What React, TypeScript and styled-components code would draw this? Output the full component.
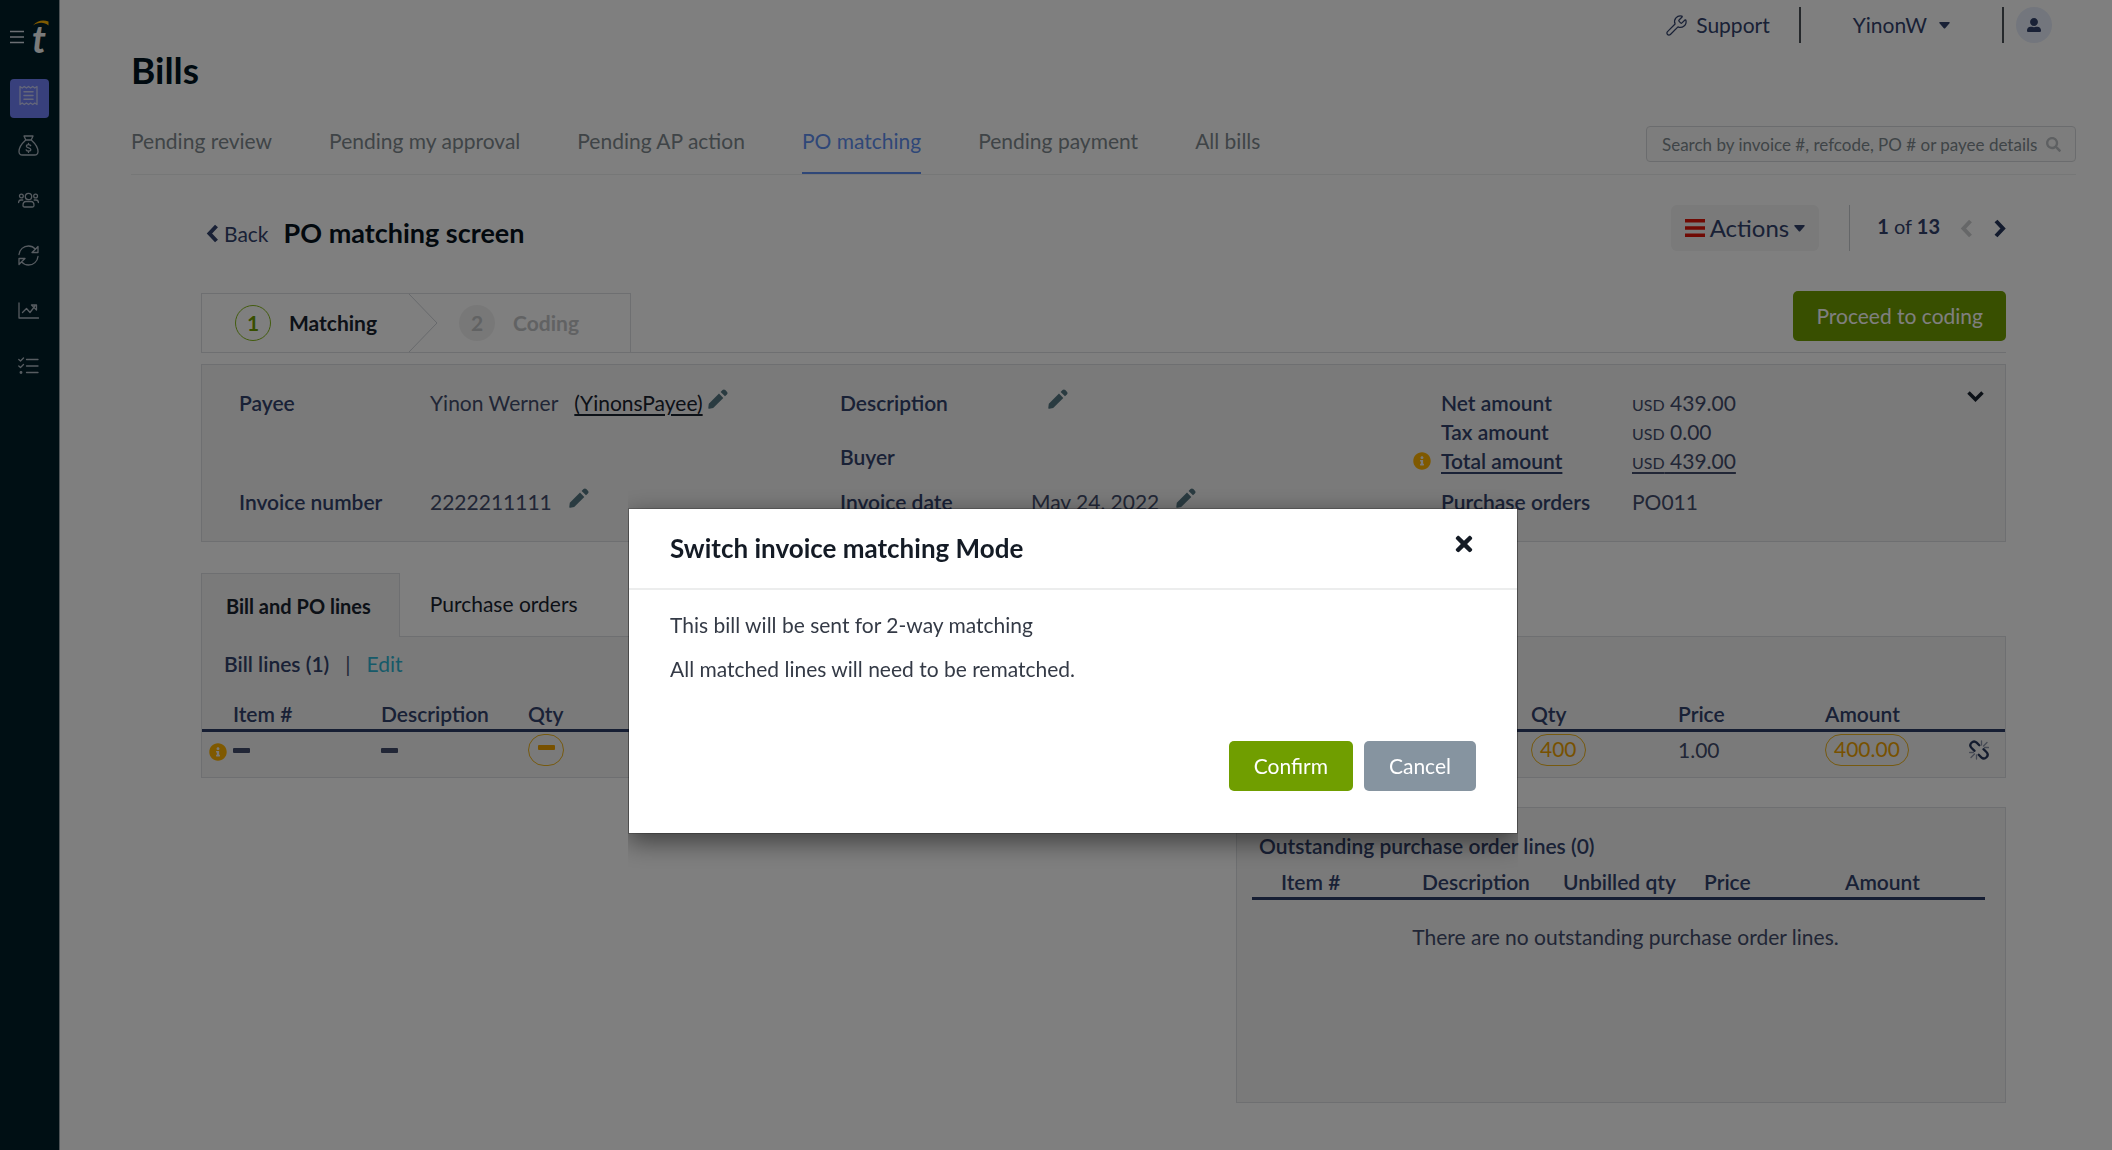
import React from "react";
import styled, { createGlobalStyle, css } from "styled-components";
import { Wrench } from "lucide-react";
import { FaInfoCircle, FaSearch, FaTimes, FaUserAlt } from "react-icons/fa";

const color = {
  navy: "#32426c",
  value: "#434d6c",
  ink: "#18222f",
  grey: "#7e898e",
  blue: "#5f8ff0",
  green: "#709e00",
  slate: "#8694a0",
  amber: "#ffb300",
  border: "#dddfe2",
  panel: "#f4f4f4",
};

const GlobalStyle = createGlobalStyle`
  *, *::before, *::after { box-sizing: border-box; }
  body {
    margin: 0;
    background: #fff;
    color: ${color.value};
    font: 400 21px/28px Lato, "Liberation Sans", sans-serif;
  }
  h1, h2, h3, p, ol, ul, dl, dd { margin: 0; padding: 0; }
  ol, ul { list-style: none; }
  a { color: inherit; text-decoration: none; }
  button {
    border: 0;
    padding: 0;
    background: none;
    color: inherit;
    font: inherit;
    cursor: pointer;
  }
  svg { display: block; flex: none; }
`;

const Shell = styled.div`
  display: flex;
  min-height: 100vh;
`;

/* Side navigation */

const Sidebar = styled.aside`
  flex: none;
  width: 60px;
  padding: 20px 10px 0;
  background: #001e29;
  border-right: 1px solid #9aa5ab;
`;

const Brand = styled.div`
  display: flex;
  align-items: center;
  gap: 9px;
  height: 34px;
  margin-bottom: 25px;
  color: #d9dee8;
`;

const NavLink = styled.a<{ $active?: boolean }>`
  display: flex;
  align-items: center;
  justify-content: center;
  width: 39px;
  height: 55px;
  padding-right: 2px;
  color: #aeb9c2;
  ${(p) =>
    p.$active &&
    css`
      height: 39px;
      padding-bottom: 6px;
      border-radius: 4px;
      background: #7080f8;
      color: #c8cdf5;
    `}
`;

/* Top bar */

const Main = styled.div`
  flex: 1;
  min-width: 0;
  padding: 7px 36px 40px 71px;
`;

const TopBar = styled.header`
  display: flex;
  align-items: center;
  justify-content: flex-end;
  height: 36px;
  padding-right: 24px;
  color: ${color.navy};
`;

const TopLink = styled.a`
  display: flex;
  align-items: center;
  gap: 8px;
`;

const AccountButton = styled.button`
  display: flex;
  align-items: center;
  gap: 12px;
  margin: 0 52px;
`;

const TopDivider = styled.span<{ $before?: number }>`
  width: 2px;
  height: 36px;
  margin-left: ${(p) => p.$before || 0}px;
  background: #4b5157;
`;

const Avatar = styled.button`
  display: flex;
  align-items: center;
  justify-content: center;
  width: 36px;
  height: 36px;
  margin-left: 12px;
  border-radius: 50%;
  background: #e6ecfa;
`;

const PageTitle = styled.h1`
  margin-top: 5px;
  color: #001420;
  font-size: 37px;
  font-weight: 700;
  line-height: 44px;
`;

const TabBar = styled.div`
  display: flex;
  align-items: flex-start;
  justify-content: space-between;
  margin-top: 34px;
  border-bottom: 1px solid #eceeef;
`;

const Tabs = styled.nav`
  display: flex;
  gap: 57px;
  padding-top: 1px;
`;

const Tab = styled.a<{ $active?: boolean }>`
  padding-bottom: 17px;
  border-bottom: 2px solid ${(p) => (p.$active ? color.blue : "transparent")};
  color: ${(p) => (p.$active ? color.blue : color.grey)};
  white-space: nowrap;
`;

const Search = styled.label`
  position: relative;
  width: 430px;
  color: #bcc0c4;

  svg {
    position: absolute;
    top: 11px;
    right: 15px;
  }
`;

const SearchInput = styled.input`
  display: block;
  width: 100%;
  height: 36px;
  padding: 0 15px;
  border: 1px solid #d7d9dc;
  border-radius: 4px;
  background: #fbfbfb;
  color: ${color.grey};
  font: 400 17px/24px Lato, "Liberation Sans", sans-serif;

  &::placeholder {
    color: ${color.grey};
    opacity: 1;
  }
`;

/* Content header */

const Content = styled.main`
  padding: 30px 70px 0;
`;

const ContentHeader = styled.div`
  display: flex;
  align-items: flex-start;
  justify-content: space-between;
`;

const TitleGroup = styled.div`
  display: flex;
  align-items: baseline;
  gap: 15px;
  margin-top: 12px;
  padding-left: 5px;
`;

const BackLink = styled.a`
  display: flex;
  align-items: center;
  gap: 5px;
  color: ${color.navy};
  line-height: 32px;
`;

const ScreenTitle = styled.h2`
  color: #06131d;
  font-size: 27px;
  font-weight: 700;
  line-height: 32px;
`;

const HeaderTools = styled.div`
  display: flex;
  align-items: center;
  height: 46px;
`;

const ActionsButton = styled.button`
  display: flex;
  align-items: center;
  gap: 5px;
  height: 46px;
  padding: 0 14px;
  border-radius: 6px;
  background: ${color.panel};
  color: ${color.navy};
  font-size: 24px;
`;

const Pager = styled.div`
  display: flex;
  align-items: center;
  height: 46px;
  margin-left: 30px;
  padding-left: 27px;
  border-left: 1px solid #c9ccd0;
  color: ${color.navy};
`;

const PagerText = styled.span`
  padding-bottom: 4px;
  font-size: 20px;

  b {
    font-weight: 700;
  }
`;

const PagerButton = styled.button<{ $muted?: boolean }>`
  margin-left: 20px;
  color: ${(p) => (p.$muted ? "#cdcfd1" : "#26365c")};
`;

/* Steps */

const StepRow = styled.div`
  display: flex;
  align-items: flex-start;
  justify-content: space-between;
  margin-top: 40px;
  border-bottom: 1px solid ${color.border};
`;

const Steps = styled.ol`
  display: flex;
  height: 59px;
  margin-top: 2px;
  border: 1px solid ${color.border};
  border-bottom: 0;
`;

const Step = styled.li<{ $current?: boolean }>`
  display: flex;
  align-items: center;
  gap: 18px;
  padding: ${(p) => (p.$current ? "0 32px 0 33px" : "0 51px 0 21px")};
  color: ${(p) => (p.$current ? color.ink : "#c3c5c7")};
  font-weight: 700;
`;

const StepNumber = styled.span<{ $current?: boolean }>`
  display: flex;
  align-items: center;
  justify-content: center;
  width: 36px;
  height: 36px;
  border-radius: 50%;
  ${(p) =>
    p.$current
      ? css`
          border: 1px solid #86b81c;
          color: ${color.green};
        `
      : css`
          background: #f1f1f1;
          color: #c3c5c7;
        `}
`;

const Button = styled.button<{ $tone?: "slate"; $roomy?: boolean }>`
  height: 50px;
  padding: 0 ${(p) => (p.$roomy ? 25 : 23)}px;
  border-radius: 5px;
  background: ${(p) => (p.$tone === "slate" ? color.slate : color.green)};
  color: #fff;
`;

/* Invoice details */

const Panel = styled.section`
  border: 1px solid ${color.border};
  background: ${color.panel};
`;

const DetailsPanel = styled(Panel)`
  display: grid;
  grid-template-columns: repeat(3, 1fr);
  margin-top: 11px;
`;

const DetailColumn = styled.div`
  display: flex;
  flex-direction: column;
  justify-content: space-between;
  padding: 23px 0 25px 9px;
`;

const Detail = styled.div<{ $tall?: boolean; $apart?: boolean }>`
  display: grid;
  grid-template-columns: 28px 191px 1fr;
  height: ${(p) => (p.$tall ? 54 : 29)}px;
  margin-top: ${(p) => (p.$apart ? 12 : 0)}px;
  line-height: 29px;
`;

const DetailIcon = styled.span`
  display: flex;
  align-items: center;
  color: ${color.amber};
`;

const DetailLabel = styled.span<{ $underline?: boolean }>`
  color: ${color.navy};
  font-weight: 600;
  text-decoration: ${(p) => (p.$underline ? "underline" : "none")};
  text-underline-offset: 3px;
`;

const DetailValue = styled.span`
  display: flex;
  align-items: flex-start;
  white-space: nowrap;
`;

const Amount = styled.span<{ $underline?: boolean }>`
  text-decoration: ${(p) => (p.$underline ? "underline" : "none")};
  text-underline-offset: 3px;
`;

const Currency = styled.span`
  font-size: 16px;
  line-height: 16px;
`;

const PayeeLink = styled.a`
  margin: 0 -12px 0 16px;
  color: ${color.ink};
  text-decoration: underline;
  text-underline-offset: 3px;
`;

const EditButton = styled.button`
  margin: 1px 0 0 17px;
  color: #557682;
`;

const TotalsColumn = styled.div`
  display: flex;
  justify-content: space-between;
`;

const CollapseButton = styled.button`
  align-self: flex-start;
  margin: 26px 21px 0 0;
  color: ${color.ink};
`;

/* Matched lines */

const PanelTabs = styled.nav`
  display: flex;
  margin-top: 31px;
`;

const PanelTab = styled.a<{ $active?: boolean }>`
  padding: 17px 30px;
  color: ${color.ink};
  ${(p) =>
    p.$active &&
    css`
      position: relative;
      margin-bottom: -1px;
      padding: 18px 28px 17px 24px;
      border: 1px solid ${color.border};
      border-bottom: 0;
      background: ${color.panel};
      font-size: 20px;
      font-weight: 700;
    `}
`;

const LinesPanel = styled(Panel)`
  padding-top: 13px;
`;

const LinesHeading = styled.div`
  display: flex;
  gap: 16px;
  padding-left: 22px;
`;

const SectionTitle = styled.h3`
  color: ${color.navy};
  font-size: 21px;
  font-weight: 600;
  line-height: 28px;
`;

const EditLink = styled.a`
  color: #2fb4d3;
`;

const LinesTable = styled.table`
  width: 100%;
  margin-top: 8px;
  border-collapse: collapse;
  table-layout: fixed;
`;

const Col = styled.col<{ $w?: number }>`
  width: ${(p) => (p.$w ? `${p.$w}px` : "auto")};
`;

const HeadCell = styled.th<{ $lead?: boolean }>`
  padding: ${(p) => (p.$lead ? 14 : 0)}px 0 1px;
  border-bottom: 3px solid #2c3d66;
  color: ${color.navy};
  font-weight: 600;
  text-align: left;
  white-space: nowrap;
`;

const Cell = styled.td`
  height: 46px;
  padding: 2px 0 0;
  vertical-align: top;
  color: ${color.value};

  > svg {
    margin-top: 14px;
  }
`;

const InfoCell = styled(Cell)`
  padding-left: 7px;
  color: ${color.amber};

  > svg {
    margin-top: 9px;
  }
`;

const NumberCell = styled(Cell)`
  padding-top: 4px;
`;

const UnlinkCell = styled(Cell)`
  text-align: right;
  padding-right: 16px;

  button {
    margin-top: 6px;
  }
`;

const Pill = styled.span`
  display: flex;
  justify-content: center;
  width: fit-content;
  min-width: 36px;
  height: 32px;
  padding: 0 8px;
  border: 1px solid #eeb41e;
  border-radius: 16px;
  color: #f0a300;
  line-height: 28px;

  svg {
    margin-top: 10px;
  }
`;

const OutstandingPanel = styled(Panel)`
  width: 770px;
  max-width: 100%;
  min-height: 296px;
  margin: 29px 0 0 auto;
  padding: 24px 20px 0 15px;

  ${SectionTitle} {
    padding-left: 7px;
  }
`;

const EmptyCell = styled.td`
  padding: 23px 0 0 14px;
  text-align: center;
`;

/* Dialog */

const Backdrop = styled.div`
  position: fixed;
  inset: 0;
  z-index: 10;
  display: flex;
  align-items: flex-start;
  justify-content: center;
  padding: 508px 0 0 34px;
  background: rgba(0, 0, 0, 0.5);
`;

const Dialog = styled.div`
  width: 890px;
  max-width: 100%;
  border: 1px solid rgba(0, 0, 0, 0.2);
  background: #fff;
  background-clip: padding-box;
  box-shadow: 0 8px 24px rgba(0, 0, 0, 0.5);
  clip-path: inset(-60px 0);
`;

const DialogHeader = styled.div`
  display: flex;
  align-items: flex-start;
  justify-content: space-between;
  padding: 23px 41px 24px;
  border-bottom: 2px solid #eceded;
  color: #141b25;
`;

const DialogTitle = styled.h2`
  font-size: 26px;
  font-weight: 700;
  line-height: 32px;
`;

const DialogBody = styled.div`
  display: grid;
  gap: 16px;
  padding: 21px 41px 0;
  color: #343a46;
`;

const DialogFooter = styled.div`
  display: flex;
  justify-content: flex-end;
  gap: 11px;
  padding: 58px 41px 42px;
`;

/* Icons */

const Menu = () => (
  <svg width="14" height="14" viewBox="0 0 14 14" stroke="currentColor" strokeWidth="1.5">
    <path d="M0 1.5h14M0 7h14M0 12.5h14" />
  </svg>
);

const Logo = () => (
  <svg width="17" height="34" viewBox="0 0 17 34" overflow="visible">
    <text x="-1" y="33" fill="#f4f6f6" fontFamily="Lato" fontStyle="italic" fontWeight="700" fontSize="38">
      t
    </text>
    <path d="M0 5.500C4 .5 10-.5 15.500 1.500V5.500C11 1.500 5 2 0 5.500Z" fill="#ffb400" />
  </svg>
);

const lineIcon = {
  width: 21,
  height: 21,
  viewBox: "0 0 21 21",
  fill: "none",
  stroke: "currentColor",
  strokeWidth: 1.3,
  strokeLinecap: "round" as const,
  strokeLinejoin: "round" as const,
};

const ReceiptIcon = () => (
  <svg {...lineIcon}>
    <path d="M2 1.500 4.200 3 6.300 1.500 8.400 3 10.500 1.500 12.600 3 14.700 1.500 16.800 3 19 1.500V19.500L16.800 18 14.700 19.500 12.600 18 10.500 19.500 8.400 18 6.300 19.500 4.200 18 2 19.500Z" />
    <path d="M6 6.800h9M6 10.500h9M6 14.200h9" strokeWidth="1.500" />
  </svg>
);

const MoneyIcon = () => (
  <svg {...lineIcon}>
    <path d="M6 1h9l-1.800 4H7.800ZM7.800 5C4.500 8 1 11 1 16.500 1 19 2.500 20 4.500 20h12c2 0 3.500-1 3.500-3.500C20 11 16.500 8 13.200 5" />
    <path d="M12.700 10.700c-.5-.8-1.300-1-2.200-1-1.200 0-2.100.6-2.100 1.500 0 2.200 4.400 1 4.400 3.300 0 1-1 1.600-2.200 1.600-1 0-2-.4-2.400-1.200M10.500 8.500v1.200M10.500 16v1.400" />
  </svg>
);

const PeopleIcon = () => (
  <svg {...lineIcon}>
    <circle cx="10.500" cy="6.500" r="3.200" />
    <circle cx="3.400" cy="6" r="1.900" />
    <circle cx="17.600" cy="6" r="1.900" />
    <path d="M5 15.500c0-2.500 1.200-4 3-4h5c1.800 0 3 1.500 3 4 0 1-.6 1.500-1.500 1.500h-8C5.600 17 5 16.500 5 15.500ZM.600 12.500c0-1.600.9-2.500 2.400-2.500h1.800M20.400 12.500c0-1.600-.9-2.500-2.400-2.500h-1.800" />
  </svg>
);

const RefreshIcon = () => (
  <svg {...lineIcon}>
    <path d="M1 9.500C1.500 4.500 5.500 1 10.500 1c3 0 5.200 1.200 6.900 3.200L20 1.500V7.500H14L17.400 4.200M20 11.500C19.500 16.500 15.500 20 10.500 20c-3 0-5.200-1.200-6.900-3.200L1 19.500V13.500H7L3.600 16.800" />
  </svg>
);

const ChartIcon = () => (
  <svg {...lineIcon}>
    <path d="M1 3v15h19.500M4.500 12.500 8.500 8.500 12 12.500 17 6M13.500 5H18.500V10Z" />
  </svg>
);

const ChecklistIcon = () => (
  <svg {...lineIcon}>
    <path d="M8.500 4.500H20M8.500 11H20M8.500 17.500H20M.800 4.500 2.500 6 5.500 3M.800 11 2.500 12.500 5.500 9.500" />
    <circle cx="3" cy="17.500" r=".8" fill="currentColor" />
  </svg>
);

const Caret = () => (
  <svg width="11" height="7" viewBox="0 0 11 7" fill="currentColor">
    <path d="M1 0h9c.8 0 1 .8.5 1.300L6.200 6.300c-.4.4-1 .4-1.400 0L.5 1.300C0 .8.200 0 1 0Z" />
  </svg>
);

const RedBars = () => (
  <svg width="20" height="18" viewBox="0 0 20 18" fill="#e01508">
    <path d="M0 0h20v3.500H0ZM0 7.200h20v3.500H0ZM0 14.400h20v3.500H0Z" />
  </svg>
);

const chevrons = { left: "M10.500 2 3.500 9.500 10.500 17", right: "M3 2 10 9.500 3 17" };

const Chevron = ({ to }: { to: "left" | "right" }) => (
  <svg width="13" height="19" viewBox="0 0 13 19" fill="none" stroke="currentColor" strokeWidth="4">
    <path d={chevrons[to]} />
  </svg>
);

const ChevronDown = () => (
  <svg width="17" height="11" viewBox="0 0 17 11" fill="none" stroke="currentColor" strokeWidth="3.500">
    <path d="M1.500 1.500 8.500 8.500 15.500 1.500" />
  </svg>
);

const StepArrow = () => (
  <svg width="29" height="58" viewBox="0 0 29 58" fill="none" stroke="#cfd3d8">
    <path d="M0 0 28 29 0 58" />
  </svg>
);

const Pencil = () => (
  <svg width="20" height="20" viewBox="0 0 20 20" fill="currentColor">
    <path d="M.8 14.800 11 4.600 15.300 8.900 5.200 19.100 1.300 19.700C.6 19.800.200 19.400.3 18.700ZM12.600 3 14.500 1.100C15.400.200 16.400.200 17.300 1.100L18.900 2.700C19.800 3.600 19.800 4.600 18.900 5.500L17 7.300Z" />
  </svg>
);

const Dash = () => (
  <svg width="17" height="6" viewBox="0 0 17 6" fill="currentColor">
    <rect width="17" height="5" rx="1" />
  </svg>
);

const UnlinkIcon = () => (
  <svg width="20" height="20" viewBox="0 0 20 20" fill="none" strokeLinecap="round">
    <path
      d="M5.500 10.800 2.600 8C1 6.400 1 4.300 2.500 2.800 4 1.300 6.100 1.300 7.700 2.700L10.300 5.300M14.500 9.200 17.400 12C19 13.600 19 15.700 17.500 17.200 16 18.700 13.900 18.700 12.300 17.300L9.700 14.700"
      stroke="#26365c"
      strokeWidth="2.300"
    />
    <path d="M12.500 5V1M14.500 6 18 2.500M15.500 7.500H19.500M7.500 15v4M5.500 14 2 17.500M4.500 12.500H.600" stroke="#8b93a8" strokeWidth="1.300" />
  </svg>
);

/* Page */

const navItems = [
  { label: "Bills", Icon: ReceiptIcon },
  { label: "Payments", Icon: MoneyIcon },
  { label: "Payees", Icon: PeopleIcon },
  { label: "Sync", Icon: RefreshIcon },
  { label: "Reports", Icon: ChartIcon },
  { label: "Tasks", Icon: ChecklistIcon },
];

const billTabs = [
  "Pending review",
  "Pending my approval",
  "Pending AP action",
  "PO matching",
  "Pending payment",
  "All bills",
];

const amounts = [
  { label: "Net amount", value: "439.00" },
  { label: "Tax amount", value: "0.00" },
  { label: "Total amount", value: "439.00", flagged: true },
];

interface DetailRowProps {
  label: string;
  children?: React.ReactNode;
  editable?: boolean;
  tall?: boolean;
  apart?: boolean;
  flagged?: boolean;
}

const DetailRow = ({ label, children, editable, tall, apart, flagged }: DetailRowProps) => (
  <Detail $tall={tall} $apart={apart}>
    <DetailIcon>{flagged && <FaInfoCircle size={18} />}</DetailIcon>
    <DetailLabel $underline={flagged}>{label}</DetailLabel>
    <DetailValue>
      {children}
      {editable && (
        <EditButton aria-label={`Edit ${label}`}>
          <Pencil />
        </EditButton>
      )}
    </DetailValue>
  </Detail>
);

const SwitchModeDialog = () => (
  <Backdrop>
    <Dialog role="dialog" aria-modal="true" aria-labelledby="dialog-title">
      <DialogHeader>
        <DialogTitle id="dialog-title">Switch invoice matching Mode</DialogTitle>
        <button aria-label="Close">
          <FaTimes size={24} />
        </button>
      </DialogHeader>
      <DialogBody>
        <p>This bill will be sent for 2-way matching</p>
        <p>All matched lines will need to be rematched.</p>
      </DialogBody>
      <DialogFooter>
        <Button $roomy>Confirm</Button>
        <Button $roomy $tone="slate">
          Cancel
        </Button>
      </DialogFooter>
    </Dialog>
  </Backdrop>
);

export default function App() {
  return (
    <>
      <GlobalStyle />
      <Shell>
        <Sidebar>
          <Brand>
            <Menu />
            <Logo />
          </Brand>
          <nav>
            {navItems.map(({ label, Icon }, i) => (
              <NavLink key={label} href="#" aria-label={label} $active={i === 0}>
                <Icon />
              </NavLink>
            ))}
          </nav>
        </Sidebar>

        <Main>
          <TopBar>
            <TopLink href="#">
              <Wrench size={23} strokeWidth={1.3} />
              Support
            </TopLink>
            <TopDivider $before={29} />
            <AccountButton>
              YinonW
              <Caret />
            </AccountButton>
            <TopDivider />
            <Avatar aria-label="Profile">
              <FaUserAlt size={14} />
            </Avatar>
          </TopBar>

          <PageTitle>Bills</PageTitle>
          <TabBar>
            <Tabs>
              {billTabs.map((tab) => (
                <Tab key={tab} href="#" $active={tab === "PO matching"}>
                  {tab}
                </Tab>
              ))}
            </Tabs>
            <Search aria-label="Search bills">
              <SearchInput placeholder="Search by invoice #, refcode, PO # or payee details" />
              <FaSearch size={15} />
            </Search>
          </TabBar>

          <Content>
            <ContentHeader>
              <TitleGroup>
                <BackLink href="#">
                  <Chevron to="left" />
                  Back
                </BackLink>
                <ScreenTitle>PO matching screen</ScreenTitle>
              </TitleGroup>
              <HeaderTools>
                <ActionsButton>
                  <RedBars />
                  Actions
                  <Caret />
                </ActionsButton>
                <Pager>
                  <PagerText>
                    <b>1</b> of <b>13</b>
                  </PagerText>
                  <PagerButton $muted aria-label="Previous bill">
                    <Chevron to="left" />
                  </PagerButton>
                  <PagerButton aria-label="Next bill">
                    <Chevron to="right" />
                  </PagerButton>
                </Pager>
              </HeaderTools>
            </ContentHeader>

            <StepRow>
              <Steps>
                <Step $current>
                  <StepNumber $current>1</StepNumber>
                  Matching
                </Step>
                <StepArrow />
                <Step>
                  <StepNumber>2</StepNumber>
                  Coding
                </Step>
              </Steps>
              <Button>Proceed to coding</Button>
            </StepRow>

            <DetailsPanel>
              <DetailColumn>
                <DetailRow label="Payee" editable>
                  Yinon Werner
                  <PayeeLink href="#">(YinonsPayee)</PayeeLink>
                </DetailRow>
                <DetailRow label="Invoice number" editable>
                  2222211111
                </DetailRow>
              </DetailColumn>
              <DetailColumn>
                <div>
                  <DetailRow label="Description" editable tall />
                  <DetailRow label="Buyer" />
                </div>
                <DetailRow label="Invoice date" editable>
                  May 24, 2022
                </DetailRow>
              </DetailColumn>
              <TotalsColumn>
                <DetailColumn>
                  {amounts.map(({ label, value, flagged }) => (
                    <DetailRow key={label} label={label} flagged={flagged}>
                      <Amount $underline={flagged}>
                        <Currency>USD</Currency> {value}
                      </Amount>
                    </DetailRow>
                  ))}
                  <DetailRow label="Purchase orders" apart>
                    PO011
                  </DetailRow>
                </DetailColumn>
                <CollapseButton aria-label="Collapse details">
                  <ChevronDown />
                </CollapseButton>
              </TotalsColumn>
            </DetailsPanel>

            <PanelTabs>
              <PanelTab href="#" $active>
                Bill and PO lines
              </PanelTab>
              <PanelTab href="#">Purchase orders</PanelTab>
            </PanelTabs>
            <LinesPanel>
              <LinesHeading>
                <SectionTitle>Bill lines (1)</SectionTitle>
                <span>|</span>
                <EditLink href="#">Edit</EditLink>
              </LinesHeading>
              <LinesTable>
                <colgroup>
                  <Col $w={31} />
                  <Col $w={148} />
                  <Col $w={147} />
                  <Col $w={147} />
                  <Col />
                  <Col $w={147} />
                  <Col $w={147} />
                  <Col $w={112} />
                  <Col $w={68} />
                </colgroup>
                <thead>
                  <tr>
                    <HeadCell $lead />
                    <HeadCell $lead>Item #</HeadCell>
                    <HeadCell $lead>Description</HeadCell>
                    <HeadCell $lead>Qty</HeadCell>
                    <HeadCell $lead />
                    <HeadCell $lead>Qty</HeadCell>
                    <HeadCell $lead>Price</HeadCell>
                    <HeadCell $lead>Amount</HeadCell>
                    <HeadCell $lead />
                  </tr>
                </thead>
                <tbody>
                  <tr>
                    <InfoCell>
                      <FaInfoCircle size={18} />
                    </InfoCell>
                    <Cell>
                      <Dash />
                    </Cell>
                    <Cell>
                      <Dash />
                    </Cell>
                    <Cell>
                      <Pill>
                        <Dash />
                      </Pill>
                    </Cell>
                    <Cell />
                    <Cell>
                      <Pill>400</Pill>
                    </Cell>
                    <NumberCell>1.00</NumberCell>
                    <Cell>
                      <Pill>400.00</Pill>
                    </Cell>
                    <UnlinkCell>
                      <button aria-label="Unlink line">
                        <UnlinkIcon />
                      </button>
                    </UnlinkCell>
                  </tr>
                </tbody>
              </LinesTable>
            </LinesPanel>

            <OutstandingPanel>
              <SectionTitle>Outstanding purchase order lines (0)</SectionTitle>
              <LinesTable>
                <colgroup>
                  <Col $w={29} />
                  <Col $w={141} />
                  <Col $w={141} />
                  <Col $w={141} />
                  <Col $w={141} />
                  <Col />
                </colgroup>
                <thead>
                  <tr>
                    <HeadCell />
                    <HeadCell>Item #</HeadCell>
                    <HeadCell>Description</HeadCell>
                    <HeadCell>Unbilled qty</HeadCell>
                    <HeadCell>Price</HeadCell>
                    <HeadCell>Amount</HeadCell>
                  </tr>
                </thead>
                <tbody>
                  <tr>
                    <EmptyCell colSpan={6}>There are no outstanding purchase order lines.</EmptyCell>
                  </tr>
                </tbody>
              </LinesTable>
            </OutstandingPanel>
          </Content>
        </Main>
      </Shell>
      <SwitchModeDialog />
    </>
  );
}
